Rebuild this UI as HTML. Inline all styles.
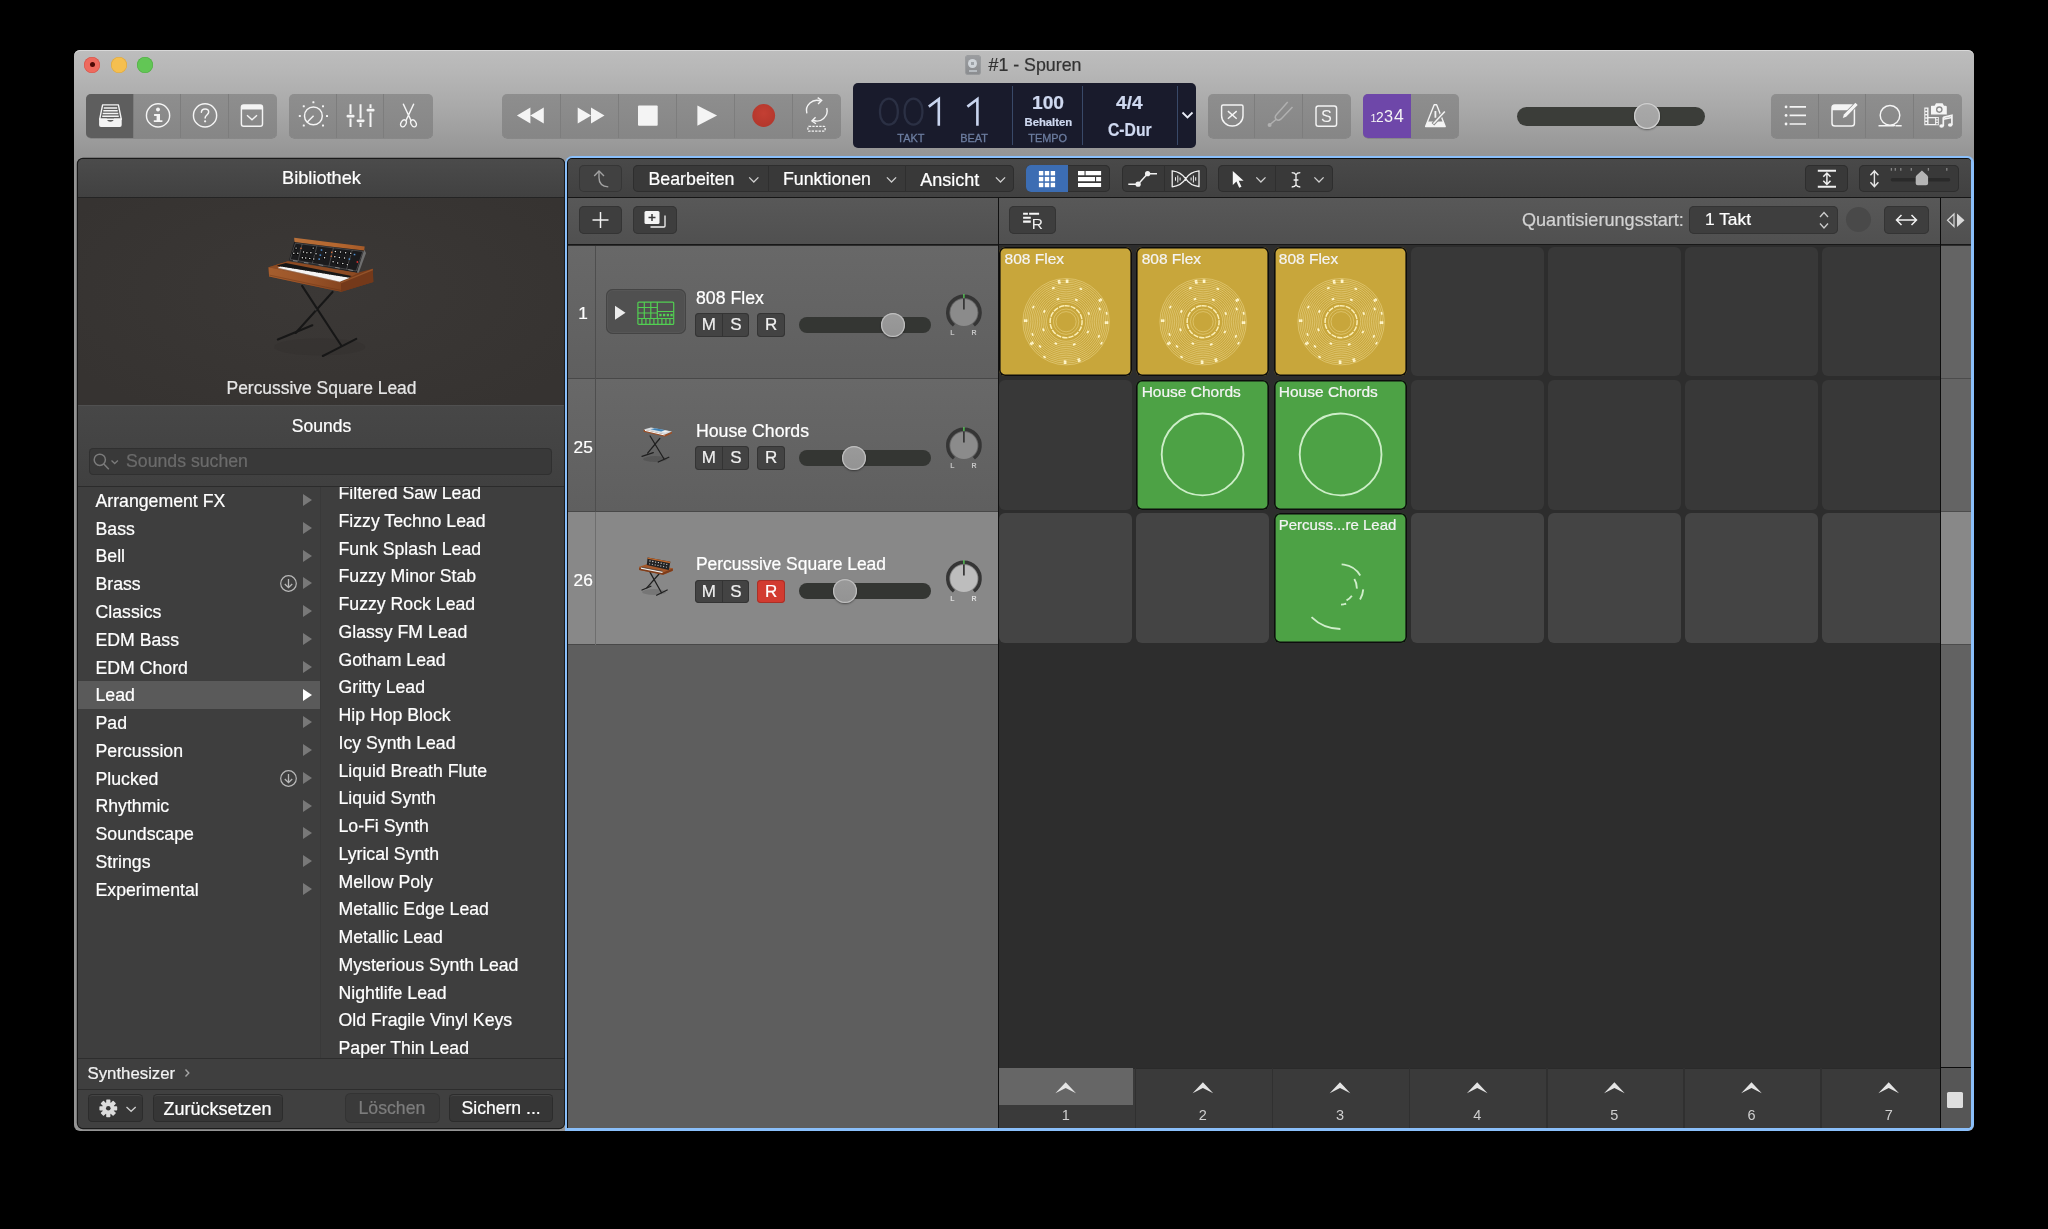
<!DOCTYPE html><html><head><meta charset="utf-8"><title>Logic</title><style>
*{box-sizing:border-box;margin:0;padding:0}
html,body{width:2048px;height:1229px;background:#000;overflow:hidden}
body{position:relative;font-family:"Liberation Sans",sans-serif;color:#fff;font-size:17.7px;-webkit-text-stroke:.22px currentColor}
.a{position:absolute}
.win{will-change:transform;position:absolute;left:74px;top:50px;width:1900px;height:1081px;border-radius:6px;overflow:hidden;
 background:linear-gradient(#bdbdbd 0px,#b7b7b7 20px,#a8a8a8 60px,#979797 100px,#949494 108px,#949494 100%);
 box-shadow:inset 0 1px 0 #d8d8d8}
.tl{position:absolute;width:16px;height:16px;border-radius:50%;top:6.6px;margin-left:-.2px}
.tbg{position:absolute;top:44px;height:44px;border-radius:5px;background:linear-gradient(#8e8e8e,#868686);box-shadow:0 .5px .5px rgba(0,0,0,.25);display:flex;overflow:hidden}
.tbg>div{position:relative;height:44px;border-right:1px solid #7d7d7d;flex:none}
.tbg>div:last-child{border-right:none}
.tbg svg{position:absolute;left:0;top:0;overflow:visible}
.t{position:absolute;white-space:nowrap;line-height:1}
.lcd{position:absolute;left:778.5px;top:33px;width:343px;height:65px;border-radius:5px;background:#191b2c}
.lcd .lab{position:absolute;font-size:10.9px;color:#6c7da0;-webkit-text-stroke:.3px #6c7da0;letter-spacing:0;line-height:1;white-space:nowrap}
.lcd .b{position:absolute;font-weight:bold;color:#cfd9f0;line-height:1;white-space:nowrap}
.lcd .sep{position:absolute;top:3px;height:59px;width:1.3px;background:#394968}
/* library */
.lib{position:absolute;left:3.5px;top:109px;width:486.8px;height:968.8px;border-radius:5px;background:#3e3e3e;overflow:hidden;box-shadow:0 0 0 1.2px #1a1a1a}
.lib .hd{position:absolute;left:0;top:0;width:488px;height:38.8px;background:linear-gradient(#4b4b4b,#414141);border-bottom:1.5px solid #242424}
.cat{position:absolute;left:18px;white-space:nowrap;line-height:1;font-size:17.7px}
.snd{position:absolute;left:261px;white-space:nowrap;line-height:1;font-size:17.7px}
.arr{position:absolute;left:225.2px;width:0;height:0;border-left:9px solid #7a7a7a;border-top:6.5px solid transparent;border-bottom:6.5px solid transparent}
.btn{position:absolute;border-radius:4.5px;background:#363636;box-shadow:0 0 0 1px #2c2c2c inset,inset 0 2px 0 #444}
/* main */
.main{position:absolute;left:491px;top:106px;width:1409px;height:975px;border-radius:7.5px 6.5px 6.5px 0;background:#8abffa;overflow:hidden}
.min{position:absolute;left:2.3px;top:2.3px;right:2.6px;bottom:2.8px;border-radius:5px 4px 4px 0;background:#0e0e0e;overflow:hidden}
.min2{position:absolute;left:.7px;top:.7px;right:.4px;bottom:.2px;border-radius:4px 3.5px 3px 0;background:#2d2d2d;overflow:hidden}
.mb{position:absolute;top:6.2px;height:27.2px;border-radius:5px;background:#393939;box-shadow:0 0 0 1px #2e2e2e inset;overflow:hidden}
.mb svg,.mb2 svg{position:absolute;left:0;top:0;overflow:visible}
.mb2{position:absolute;top:47.5px;height:27.2px;border-radius:5px;background:#3e3e3e;box-shadow:0 0 0 1px #343434 inset;overflow:hidden}
.trk{position:absolute;left:0;width:429px;height:133px}
.trk .num{position:absolute;left:0;width:28px;text-align:center;font-size:17.7px;line-height:1;top:60px}
.ms{position:absolute;height:23.6px;border-radius:4px;background:#434343;box-shadow:0 0 0 1px #343434 inset;font-size:17px;line-height:24.2px;text-align:center;color:#f0f0f0}
.sl{position:absolute;left:231px;width:132px;height:16px;border-radius:8px;background:#343633}
.kn{position:absolute;width:24px;height:24px;border-radius:50%;background:linear-gradient(#9a9a9a,#939393);box-shadow:0 0 0 1.2px #bebebe inset,0 1px 2px rgba(0,0,0,.45)}
.cell{position:absolute;width:133px;height:129.6px;border-radius:6px;background:#383838}
.cell.y{background:#c8a63b;box-shadow:0 0 0 1.6px #0d0d0d inset}
.cell.g{background:#4da245;box-shadow:0 0 0 1.6px #0d0d0d inset}
.cell .nm{position:absolute;left:5.2px;top:3.9px;font-size:15.5px;line-height:1;white-space:nowrap;color:#f4f4f4}
.cell svg{position:absolute;left:0;top:0}
</style></head><body><div class="win"><div class="tl" style="left:10.600px;background:#ee6a5e;box-shadow:0 0 0 .6px #d5544a inset"></div><div class="a" style="left:15.900px;top:12.100px;width:5px;height:5px;border-radius:50%;background:#4d0a05"></div><div class="tl" style="left:36.900px;background:#f5bf4f;box-shadow:0 0 0 .600px #dba741 inset"></div><div class="tl" style="left:63.200px;background:#62c655;box-shadow:0 0 0 .600px #51ae44 inset"></div><div class="a" style="left:891.500px;top:5.500px;width:14.200px;height:18.800px;border-radius:1px;background:linear-gradient(#9a9c9f,#8b8d90);box-shadow:0 0 0 .500px #7d8084"><div class="a" style="left:2.600px;top:3px;width:9px;height:9px;border-radius:50%;background:radial-gradient(#9da2a7 25%,#cfd4d9 30%)"></div><div class="a" style="left:3px;top:14.500px;width:8.200px;height:1.800px;background:#b6bbc0"></div></div><div class="t" style="left:914.500px;top:7px;font-size:17.800px;color:#333">#1 - Spuren</div><div class="tbg" style="left:12px"><div style="width:47.7px;background:#5e5e5e;"><svg width="48" height="44" viewBox="0 0 48 44" ><path d="M16.600 10.900h15.800l2.900 14.300h-21.600z" fill="none" stroke="#f4f4f4" stroke-width="1.400" stroke-linejoin="round"/>
<path d="M17.800 14.100h13.400M17.300 16.800h14.400M16.700 19.500h15.600M16.200 22.200h16.600" stroke="#f4f4f4" stroke-width="1.500" fill="none"/>
<path d="M13.100 24.400h7.600c.3 2.100 1.700 3.300 3.700 3.300s3.400-1.200 3.700-3.300h7.600v6.600a1.900 1.900 0 0 1-1.900 1.900h-18.800a1.900 1.900 0 0 1-1.900-1.900z" fill="#f4f4f4"/></svg></div><div style="width:47.7px;"><svg width="48" height="44" viewBox="0 0 48 44" ><circle cx="24.050" cy="21.400" r="11.600" fill="none" stroke="#f4f4f4" stroke-width="1.450"/>
<circle cx="24" cy="15.500" r="1.950" fill="#f4f4f4"/><path d="M20.100 20.100h5.900v6.100h2.400v1.900h-8.600v-1.900h2.800v-4.300h-2.500z" fill="#f4f4f4"/></svg></div><div style="width:47.7px;"><svg width="48" height="44" viewBox="0 0 48 44" ><circle cx="24.050" cy="21.400" r="11.600" fill="none" stroke="#f4f4f4" stroke-width="1.450"/>
<path d="M20.400 18.300c.1-2.100 1.600-3.300 3.700-3.300s3.600 1.300 3.600 3.100c0 2.900-3.600 2.900-3.600 5.900" fill="none" stroke="#f4f4f4" stroke-width="1.500" stroke-linecap="round"/><circle cx="24.100" cy="27.300" r="1.150" fill="#f4f4f4"/></svg></div><div style="width:47.8px;"><svg width="48" height="44" viewBox="0 0 48 44" ><rect x="12.400" y="10.900" width="21.100" height="21.300" rx="2.300" fill="none" stroke="#f4f4f4" stroke-width="1.450"/>
<path d="M12.400 15.600v-3a1.700 1.700 0 0 1 1.700-1.700h17.700a1.700 1.700 0 0 1 1.700 1.700v3z" fill="#f4f4f4"/><path d="M18 21.300l5 4.400 5-4.400" fill="none" stroke="#f4f4f4" stroke-width="1.450"/></svg></div></div><div class="tbg" style="left:215.1px"><div style="width:48.2px;"><svg width="48" height="44" viewBox="0 0 48 44" ><circle cx="24.400" cy="21.900" r="8.900" fill="none" stroke="#f4f4f4" stroke-width="1.450"/>
<path d="M18.100 28.200l6.500-6.500" stroke="#f4f4f4" stroke-width="1.450"/><rect x="9.80" y="20.90" width="2" height="2" rx=".5" fill="#f4f4f4"/><rect x="13.78" y="11.28" width="2" height="2" rx=".5" fill="#f4f4f4"/><rect x="23.40" y="7.30" width="2" height="2" rx=".5" fill="#f4f4f4"/><rect x="33.02" y="11.28" width="2" height="2" rx=".5" fill="#f4f4f4"/><rect x="37.00" y="20.90" width="2" height="2" rx=".5" fill="#f4f4f4"/><rect x="33.02" y="30.52" width="2" height="2" rx=".5" fill="#f4f4f4"/><rect x="13.78" y="30.52" width="2" height="2" rx=".5" fill="#f4f4f4"/></svg></div><div style="width:47.2px;"><svg width="48" height="44" viewBox="0 0 48 44" ><path d="M13.500 10.200v9.800M13.500 24.400v8.500M23.550 10.200v14.400M23.550 29v3.900M33.500 10.200v3.800M33.500 18.400v14.500" stroke="#f4f4f4" stroke-width="2" fill="none"/>
<path d="M10.900 22.200h5.300M20.950 26.800h5.300M30.900 16.200h5.300" stroke="#f4f4f4" stroke-width="2.800" stroke-linecap="round" fill="none"/></svg></div><div style="width:48.4px;"><svg width="48" height="44" viewBox="0 0 48 44" ><path d="M19.400 10.200l7.600 16.300M29.600 10.200l-7.600 16.300" stroke="#f4f4f4" stroke-width="1.500" fill="none" stroke-linecap="round"/>
<ellipse cx="19.500" cy="29.300" rx="2.500" ry="3.700" transform="rotate(28 19.500 29.300)" fill="none" stroke="#f4f4f4" stroke-width="1.350"/><ellipse cx="29.500" cy="29.300" rx="2.500" ry="3.700" transform="rotate(-28 29.500 29.300)" fill="none" stroke="#f4f4f4" stroke-width="1.350"/></svg></div></div><div class="tbg" style="left:427.8px"><div style="width:59px;"><svg width="59" height="44" viewBox="0 0 59 44" ><path d="M28.400 13.600v15.800l-13.500-7.900zM41.800 13.600v15.800l-13.500-7.900z" fill="#f4f4f4"/></svg></div><div style="width:58.2px;"><svg width="58" height="44" viewBox="0 0 58 44" ><path d="M16.700 13.600v15.800l13.500-7.900zM30 13.600v15.800l13.500-7.900z" fill="#f4f4f4"/></svg></div><div style="width:58px;"><svg width="58" height="44" viewBox="0 0 58 44" ><rect x="19" y="11.500" width="19.700" height="20.200" rx="1" fill="#f4f4f4"/></svg></div><div style="width:58px;"><svg width="58" height="44" viewBox="0 0 58 44" ><path d="M20.400 11.500v20.200l19.700-10.100z" fill="#f4f4f4"/></svg></div><div style="width:58px;"><svg width="58" height="44" viewBox="0 0 58 44" ><defs><radialGradient id="rg" cx="50%" cy="40%" r="60%"><stop offset="0" stop-color="#c43f33"/><stop offset="1" stop-color="#b3372c"/></radialGradient></defs><circle cx="28.700" cy="21.500" r="11.400" fill="url(#rg)"/></svg></div><div style="width:47.7px;"><svg width="48" height="44" viewBox="0 0 48 44" ><path d="M13.85 19.37A10.3 10.3 0 0 1 27.66 7.15" fill="none" stroke="#f4f4f4" stroke-width="1.400"/><path d="M33.75 14.03A10.3 10.3 0 0 1 19.94 26.25" fill="none" stroke="#f4f4f4" stroke-width="1.400"/><path d="M24.66 3.65l4 2.800-3.600 3.600" fill="none" stroke="#f4f4f4" stroke-width="1.400"/><path d="M22.94 29.75l-4-2.800 3.600-3.600" fill="none" stroke="#f4f4f4" stroke-width="1.400"/><rect x="14.900" y="32.300" width="17.200" height="4.900" rx="1" fill="none" stroke="#f4f4f4" stroke-width="1.300" stroke-dasharray="2.300 1.150"/></svg></div></div><div class="tbg" style="left:1133.5px"><div style="width:47.9px;"><svg width="48" height="44" viewBox="0 0 48 44" ><path d="M13.600 12.400a1.500 1.500 0 0 1 1.500-1.500h18.400a1.500 1.500 0 0 1 1.500 1.500v9.300c0 5.800-4.800 10.300-10.700 10.300s-10.700-4.500-10.700-10.300z" fill="none" stroke="#f4f4f4" stroke-width="1.450"/>
<path d="M19.900 17.100l8.800 7.600M28.700 17.100l-8.800 7.600" stroke="#f4f4f4" stroke-width="1.450"/></svg></div><div style="width:48.1px;"><svg width="48" height="44" viewBox="0 0 48 44" ><path d="M32.700 8.100l-11.100 12.300c-1.700 1.900-1.500 3.800-.4 4.900s3 1.300 4.900-.4l11.400-12" fill="none" stroke="#b0b0b0" stroke-width="1.500"/>
<path d="M21.300 25.200l-6 5" stroke="#b0b0b0" stroke-width="1.400"/><circle cx="14.600" cy="30.900" r="2" fill="#b0b0b0"/></svg></div><div style="width:47.5px;"><svg width="48" height="44" viewBox="0 0 48 44" ><rect x="13" y="11.900" width="20.600" height="20.300" rx="2.300" fill="none" stroke="#f4f4f4" stroke-width="1.450"/>
<text x="23.400" y="28" font-size="16.200" text-anchor="middle" fill="#f4f4f4" font-family="Liberation Sans">S</text></svg></div></div><div class="tbg" style="left:1289.1px"><div style="width:47.6px;background:#6e47a9;border-right-color:#6e47a9;"><svg width="48" height="44" viewBox="0 0 48 44" ><text x="7.600" y="27.600" font-size="10.800" font-family="Liberation Sans" fill="#f4f4f4">1</text><text x="13.100" y="27.600" font-size="13.800" font-family="Liberation Sans" fill="#f4f4f4">2</text><text x="21" y="27.600" font-size="16.300" font-family="Liberation Sans" fill="#f4f4f4">3</text><text x="30.900" y="27.600" font-size="17.600" font-family="Liberation Sans" fill="#f4f4f4">4</text></svg></div><div style="width:48.4px;"><svg width="48" height="44" viewBox="0 0 48 44" ><path d="M23.200 10.800h2.400l8.600 21.700h-19.600z" fill="none" stroke="#f4f4f4" stroke-width="1.400" stroke-linejoin="round"/>
<path d="M16.800 27.600h15.200l2.200 4.900h-19.600z" fill="#f4f4f4"/><path d="M24.400 17v6.800" stroke="#f4f4f4" stroke-width="1.800"/>
<path d="M33.600 17.800l-11.700 12.400" stroke="#8c8c8c" stroke-width="3.600"/><path d="M33.800 17.600l-11.400 12.100" stroke="#f4f4f4" stroke-width="1.500"/></svg></div></div><div class="tbg" style="left:1697px"><div style="width:47.9px;"><svg width="48" height="44" viewBox="0 0 48 44" ><path d="M18.600 12.900h16.400M18.600 21.400h16.400M18.600 30h16.400" stroke="#f4f4f4" stroke-width="1.700"/><circle cx="15.050" cy="12.900" r="1.400" fill="#f4f4f4"/><circle cx="15.050" cy="21.400" r="1.400" fill="#f4f4f4"/><circle cx="15.050" cy="30" r="1.400" fill="#f4f4f4"/></svg></div><div style="width:47.4px;"><svg width="48" height="44" viewBox="0 0 48 44" ><rect x="13" y="11.100" width="22.400" height="20.900" rx="2.800" fill="none" stroke="#f4f4f4" stroke-width="1.500"/><path d="M13 16.200v-2.300a2.800 2.800 0 0 1 2.800-2.800h16.800a2.800 2.800 0 0 1 2.800 2.800v2.300z" fill="#f4f4f4"/>
<path d="M24.900 20.600l11.500-11.800 2.300 2.200-11.500 11.800-3.400 1.100z" fill="#f4f4f4" stroke="#8a8a8a" stroke-width="1.500" stroke-linejoin="round" paint-order="stroke"/></svg></div><div style="width:47.4px;"><svg width="48" height="44" viewBox="0 0 48 44" ><circle cx="24" cy="21.300" r="9.800" fill="none" stroke="#f4f4f4" stroke-width="1.450"/><path d="M12.500 31.800h13c1.500 0 2.500-.2 3.500-.6M29.500 31.800h6.200" fill="none" stroke="#f4f4f4" stroke-width="1.500"/></svg></div><div style="width:48.2px;"><svg width="48" height="44" viewBox="0 0 48 44" ><path d="M10.300 13.500h4.200v9.500h10.300v8.300h-14.500z" fill="#f4f4f4"/><rect x="11.300" y="14.8" width="1.800" height="1.900" fill="#8a8a8a"/><rect x="11.300" y="18.1" width="1.800" height="1.900" fill="#8a8a8a"/><rect x="11.300" y="21.4" width="1.800" height="1.900" fill="#8a8a8a"/><rect x="11.300" y="24.7" width="1.800" height="1.900" fill="#8a8a8a"/><rect x="11.300" y="28.0" width="1.800" height="1.900" fill="#8a8a8a"/><rect x="22.200" y="23.9" width="1.700" height="1.500" fill="#8a8a8a"/><rect x="22.200" y="26.4" width="1.700" height="1.500" fill="#8a8a8a"/><rect x="22.200" y="28.9" width="1.700" height="1.500" fill="#8a8a8a"/><rect x="14.500" y="24.300" width="6.600" height="5.700" fill="#8a8a8a"/><path d="M17.600 11.800h3l1.400-2.500h6.600l1.400 2.500h1.500a1.300 1.300 0 0 1 1.300 1.300v7.400h-15.800v-7.900a.8.800 0 0 1 .6-.8z" fill="#f4f4f4" stroke="#8a8a8a" stroke-width="1" paint-order="stroke"/><circle cx="25.300" cy="15.600" r="3.300" fill="#8a8a8a"/><circle cx="25.300" cy="15.600" r="1.900" fill="#f4f4f4"/><path d="M29.300 23.300l8.600-1.900v9.700M29.300 23.300v8.800" fill="none" stroke="#f4f4f4" stroke-width="1.700"/><path d="M29.300 25.300l8.600-1.900" stroke="#f4f4f4" stroke-width="1.500"/><ellipse cx="27.600" cy="32" rx="2.300" ry="1.750" fill="#f4f4f4"/><ellipse cx="36.200" cy="31" rx="2.300" ry="1.750" fill="#f4f4f4"/></svg></div></div><div class="a" style="left:1443px;top:56.500px;width:188px;height:19px;border-radius:9.500px;background:#3b3d39"></div><div class="a" style="left:1560px;top:53px;width:26px;height:26px;border-radius:50%;background:linear-gradient(#a9a9a9,#a2a2a2);box-shadow:0 0 0 1.2px #cfcfcf inset,0 1px 2px rgba(0,0,0,.4)"></div><div class="lcd"><svg width="343" height="65" viewBox="0 0 343 65" style="position:absolute;left:0;top:0"><g fill="none">
<rect x="27" y="15.600" width="17.800" height="26" rx="8.900" ry="11.500" stroke="#2b3044" stroke-width="2.300"/><rect x="51.600" y="15.600" width="17.800" height="26" rx="8.900" ry="11.500" stroke="#2b3044" stroke-width="2.300"/>
<path d="M75.800 23.600l10-7.600v26.700" stroke="#c9d5ef" stroke-width="2.600"/><path d="M114.400 23.600l10-7.600v26.700" stroke="#c9d5ef" stroke-width="2.600"/></g></svg><div class="lab" style="left:44.800px;top:50.300px">TAKT</div><div class="lab" style="left:107.800px;top:50.300px">BEAT</div><div class="lab" style="left:175.800px;top:50.300px">TEMPO</div><div class="sep" style="left:159.300px"></div><div class="sep" style="left:229.300px"></div><div class="sep" style="left:324.200px"></div><div class="b" style="left:179.500px;top:10px;font-size:19.200px">100</div><div class="b" style="left:172px;top:33.500px;font-size:11.300px">Behalten</div><div class="b" style="left:263.500px;top:10px;font-size:19.200px">4/4</div><div class="b" style="left:255.800px;top:37.500px;font-size:18.600px;transform:scaleX(.845);transform-origin:0 0">C-Dur</div><svg width="343" height="65" viewBox="0 0 343 65" style="position:absolute;left:0;top:0"><path d="M329.500 29.500l5 5 5-5" fill="none" stroke="#e8ecf6" stroke-width="1.800"/></svg></div><div class="lib"><div class="hd"></div><div class="t" style="left:0;width:488px;text-align:center;top:10.200px;font-size:18.200px">Bibliothek</div><div class="a" style="left:0;top:39px;width:488px;height:207px;background:radial-gradient(ellipse 60% 70% at 50% 45%,#3b3836,#363331)"></div><svg width="488" height="969" viewBox="0 0 488 969" style="position:absolute;left:0;top:0"><defs><linearGradient id="wf" x1="0" y1="0" x2="1" y2="0"><stop offset="0" stop-color="#a55e2e"/><stop offset=".5" stop-color="#9a5429"/><stop offset="1" stop-color="#86451f"/></linearGradient><linearGradient id="wt" x1="0" y1="0" x2="1" y2="0"><stop offset="0" stop-color="#b8703a"/><stop offset=".6" stop-color="#b5672f"/><stop offset="1" stop-color="#a55a28"/></linearGradient></defs><g transform="translate(172.300 66) scale(.11391)"><ellipse cx="610" cy="1070" rx="400" ry="75" fill="#2c2927" opacity=".22"/><g stroke="#171717" stroke-width="18.500" stroke-linecap="round" fill="none"><path d="M455 535L800 1060"/><path d="M722 588L398 948"/><path d="M242 1005L545 880"/><path d="M637 1150L930 1000"/></g><circle cx="575" cy="745" r="6" fill="#555"/><path d="M160 372L330 318L940 420L1075 385L1080 500L800 587L165 452Z" fill="#7a3c1a"/><path d="M160 372L330 318L945 422L795 500Z" fill="#8d4b23"/><path d="M160 372L795 500L800 587L165 452Z" fill="url(#wf)"/><path d="M795 500L1075 385L1080 500L800 587Z" fill="#74391a"/><path d="M795 500L1075 385L1076 398L797 512Z" fill="#94532a"/><path d="M168 440L800 575" stroke="#5a2a10" stroke-width="6" opacity=".5"/><path d="M232 356L312 334L890 448L800 494Z" fill="#161616"/><path d="M240 376L270 364L874 463L786 498Z" fill="#f4f4f4"/><path d="M272 358L872 456" stroke="#1a1a1a" stroke-width="13" stroke-dasharray="9 7 9 7 9 16 9 7 9 16"/><path d="M243 380L787 500" stroke="#bdbdbd" stroke-width="3"/><path d="M388 140L1000 215L936 416L340 310Z" fill="#1b1b1d"/><path d="M1000 215L1016 245L952 420L936 416Z" fill="#6f6f6f"/><path d="M385 113L1004 188L1000 224L388 150Z" fill="url(#wt)"/><g fill="none" stroke="#cfcfcf" stroke-width="2.500" opacity=".85"><path d="M396 160L988 232L930 404L350 302Z"/><path d="M455 167L420 314M585 183L545 336M730 200L690 362M895 221L845 389"/></g><circle cx="400" cy="205" r="13" fill="#070707"/><circle cx="402" cy="203" r="6.500" fill="#ededed"/><circle cx="380" cy="250" r="13" fill="#070707"/><circle cx="382" cy="248" r="6.500" fill="#ededed"/><circle cx="415" cy="250" r="13" fill="#070707"/><circle cx="417" cy="248" r="6.500" fill="#ededed"/><circle cx="465" cy="240" r="13" fill="#070707"/><circle cx="467" cy="238" r="6.500" fill="#ededed"/><circle cx="495" cy="245" r="13" fill="#070707"/><circle cx="497" cy="243" r="6.500" fill="#ededed"/><circle cx="530" cy="245" r="13" fill="#070707"/><circle cx="532" cy="243" r="6.500" fill="#ededed"/><circle cx="455" cy="290" r="13" fill="#070707"/><circle cx="457" cy="288" r="6.500" fill="#ededed"/><circle cx="485" cy="292" r="13" fill="#070707"/><circle cx="487" cy="290" r="6.500" fill="#ededed"/><circle cx="520" cy="295" r="13" fill="#070707"/><circle cx="522" cy="293" r="6.500" fill="#ededed"/><circle cx="550" cy="205" r="13" fill="#070707"/><circle cx="552" cy="203" r="6.500" fill="#ededed"/><circle cx="575" cy="255" r="13" fill="#070707"/><circle cx="577" cy="253" r="6.500" fill="#ededed"/><circle cx="555" cy="300" r="13" fill="#070707"/><circle cx="557" cy="298" r="6.500" fill="#ededed"/><circle cx="660" cy="245" r="13" fill="#070707"/><circle cx="662" cy="243" r="6.500" fill="#ededed"/><circle cx="650" cy="290" r="13" fill="#070707"/><circle cx="652" cy="288" r="6.500" fill="#ededed"/><circle cx="745" cy="235" r="13" fill="#070707"/><circle cx="747" cy="233" r="6.500" fill="#ededed"/><circle cx="790" cy="240" r="13" fill="#070707"/><circle cx="792" cy="238" r="6.500" fill="#ededed"/><circle cx="835" cy="245" r="13" fill="#070707"/><circle cx="837" cy="243" r="6.500" fill="#ededed"/><circle cx="880" cy="250" r="13" fill="#070707"/><circle cx="882" cy="248" r="6.500" fill="#ededed"/><circle cx="740" cy="280" r="13" fill="#070707"/><circle cx="742" cy="278" r="6.500" fill="#ededed"/><circle cx="780" cy="287" r="13" fill="#070707"/><circle cx="782" cy="285" r="6.500" fill="#ededed"/><circle cx="825" cy="292" r="13" fill="#070707"/><circle cx="827" cy="290" r="6.500" fill="#ededed"/><circle cx="725" cy="325" r="13" fill="#070707"/><circle cx="727" cy="323" r="6.500" fill="#ededed"/><circle cx="765" cy="335" r="13" fill="#070707"/><circle cx="767" cy="333" r="6.500" fill="#ededed"/><circle cx="810" cy="340" r="13" fill="#070707"/><circle cx="812" cy="338" r="6.500" fill="#ededed"/><circle cx="850" cy="350" r="13" fill="#070707"/><circle cx="852" cy="348" r="6.500" fill="#ededed"/><rect x="618" y="213" width="14" height="13" fill="#4a90d6"/><rect x="608" y="258" width="14" height="13" fill="#4a90d6"/><rect x="598" y="293" width="14" height="13" fill="#4a90d6"/><rect x="908" y="253" width="14" height="13" fill="#4a90d6"/><rect x="863" y="293" width="14" height="13" fill="#4a90d6"/><circle cx="445" cy="205" r="7" fill="#e0703a"/><circle cx="715" cy="240" r="7" fill="#e0703a"/><circle cx="710" cy="275" r="7" fill="#e0703a"/><circle cx="940" cy="325" r="8" fill="#d83030"/><path d="M375 312l40 7" stroke="#ddd" stroke-width="4"/><path d="M470 328l40 7" stroke="#ddd" stroke-width="4"/><path d="M600 348l40 7" stroke="#ddd" stroke-width="4"/><path d="M745 372l40 7" stroke="#ddd" stroke-width="4"/><path d="M860 392l40 7" stroke="#ddd" stroke-width="4"/></g></svg><div class="t" style="left:0;width:488px;text-align:center;top:220.500px;font-size:17.450px;color:#e6e6e6">Percussive Square Lead</div><div class="a" style="left:0;top:246px;width:488px;height:81.500px;background:linear-gradient(#474747,#404040);border-top:1px solid #505050;border-bottom:1.500px solid #2b2b2b"></div><div class="t" style="left:0;width:488px;text-align:center;top:259.200px;font-size:17.500px">Sounds</div><div class="a" style="left:11.500px;top:288.500px;width:463px;height:27.500px;border-radius:4.500px;background:#393939;box-shadow:0 0 0 1px #303030 inset"></div><svg width="488" height="969" viewBox="0 0 488 969" style="position:absolute;left:0;top:0"><g transform="translate(-77 -159)" fill="none" stroke="#7b7b7b" stroke-width="1.500"><circle cx="98.800" cy="459.800" r="5.600"/><path d="M102.800 464l5 5.300"/><path d="M110.500 460.500l3.200 3 3.200-3" stroke-width="1.300"/></g></svg><div class="t" style="left:48.500px;top:294.200px;font-size:17.700px;color:#6b6b6b">Sounds suchen</div><div class="a" style="left:0;top:327.500px;width:488px;height:571.500px;background:#3e3e3e;overflow:hidden"><div class="a" style="left:242px;top:0;width:1.500px;height:572px;background:#393939"></div><div class="cat" style="top:6.4px">Arrangement FX</div><div class="arr" style="top:7.6px;border-left-color:#787878"></div><div class="cat" style="top:34.1px">Bass</div><div class="arr" style="top:35.4px;border-left-color:#787878"></div><div class="cat" style="top:61.9px">Bell</div><div class="arr" style="top:63.1px;border-left-color:#787878"></div><div class="cat" style="top:89.7px">Brass</div><div class="arr" style="top:90.9px;border-left-color:#787878"></div><svg class="a" style="left:201.4px;top:87.8px" width="19" height="19" viewBox="0 0 19 19"><circle cx="9.500" cy="9.500" r="7.800" fill="none" stroke="#b9b9b9" stroke-width="1.200"/><path d="M9.500 5v8.300M5.800 10l3.700 3.600 3.700-3.600" fill="none" stroke="#b9b9b9" stroke-width="1.300"/></svg><div class="cat" style="top:117.4px">Classics</div><div class="arr" style="top:118.7px;border-left-color:#787878"></div><div class="cat" style="top:145.2px">EDM Bass</div><div class="arr" style="top:146.4px;border-left-color:#787878"></div><div class="cat" style="top:173.0px">EDM Chord</div><div class="arr" style="top:174.2px;border-left-color:#787878"></div><div class="a" style="left:0;top:194.8px;width:242px;height:27.500px;background:#5a5a5a"></div><div class="cat" style="top:200.7px">Lead</div><div class="arr" style="top:202.0px;border-left-color:#ffffff"></div><div class="cat" style="top:228.5px">Pad</div><div class="arr" style="top:229.8px;border-left-color:#787878"></div><div class="cat" style="top:256.3px">Percussion</div><div class="arr" style="top:257.5px;border-left-color:#787878"></div><div class="cat" style="top:284.1px">Plucked</div><div class="arr" style="top:285.3px;border-left-color:#787878"></div><svg class="a" style="left:201.4px;top:282.2px" width="19" height="19" viewBox="0 0 19 19"><circle cx="9.500" cy="9.500" r="7.800" fill="none" stroke="#b9b9b9" stroke-width="1.200"/><path d="M9.500 5v8.300M5.800 10l3.700 3.600 3.700-3.600" fill="none" stroke="#b9b9b9" stroke-width="1.300"/></svg><div class="cat" style="top:311.8px">Rhythmic</div><div class="arr" style="top:313.1px;border-left-color:#787878"></div><div class="cat" style="top:339.6px">Soundscape</div><div class="arr" style="top:340.8px;border-left-color:#787878"></div><div class="cat" style="top:367.4px">Strings</div><div class="arr" style="top:368.6px;border-left-color:#787878"></div><div class="cat" style="top:395.1px">Experimental</div><div class="arr" style="top:396.4px;border-left-color:#787878"></div><div class="snd" style="top:-1.4px">Filtered Saw Lead</div><div class="snd" style="top:26.4px">Fizzy Techno Lead</div><div class="snd" style="top:54.1px">Funk Splash Lead</div><div class="snd" style="top:81.9px">Fuzzy Minor Stab</div><div class="snd" style="top:109.6px">Fuzzy Rock Lead</div><div class="snd" style="top:137.4px">Glassy FM Lead</div><div class="snd" style="top:165.1px">Gotham Lead</div><div class="snd" style="top:192.9px">Gritty Lead</div><div class="snd" style="top:220.6px">Hip Hop Block</div><div class="snd" style="top:248.4px">Icy Synth Lead</div><div class="snd" style="top:276.1px">Liquid Breath Flute</div><div class="snd" style="top:303.9px">Liquid Synth</div><div class="snd" style="top:331.6px">Lo-Fi Synth</div><div class="snd" style="top:359.4px">Lyrical Synth</div><div class="snd" style="top:387.1px">Mellow Poly</div><div class="snd" style="top:414.9px">Metallic Edge Lead</div><div class="snd" style="top:442.6px">Metallic Lead</div><div class="snd" style="top:470.4px">Mysterious Synth Lead</div><div class="snd" style="top:498.1px">Nightlife Lead</div><div class="snd" style="top:525.9px">Old Fragile Vinyl Keys</div><div class="snd" style="top:553.6px">Paper Thin Lead</div></div><div class="a" style="left:0;top:899px;width:488px;height:32px;background:#3f3f3f;border-top:1.500px solid #2d2d2d;border-bottom:1.500px solid #2d2d2d"></div><div class="t" style="left:10px;top:907.300px;font-size:16.800px;color:#f2f2f2">Synthesizer</div><svg width="488" height="969" viewBox="0 0 488 969" style="position:absolute;left:0;top:0"><path d="M107.500 910.500l3.300 3.500-3.300 3.500" fill="none" stroke="#a5a5a5" stroke-width="1.400"/></svg><div class="a" style="left:0;top:931px;width:488px;height:38px;background:#404040"></div><div class="btn" style="left:10.800px;top:935.200px;width:54.500px;height:27.800px"></div><div class="btn" style="left:75.800px;top:935.200px;width:129.500px;height:27.800px"></div><div class="btn" style="left:268.500px;top:935.200px;width:92.500px;height:27.800px;background:#3a3a3a;box-shadow:0 0 0 1px #333"></div><div class="btn" style="left:371.500px;top:935.200px;width:104.300px;height:27.800px"></div><div class="t" style="left:86px;top:940.500px;font-size:18px">Zurücksetzen</div><div class="t" style="left:281px;top:941px;font-size:17.700px;color:#7d7d7d">Löschen</div><div class="t" style="left:384px;top:941px;font-size:17.600px">Sichern ...</div><svg width="488" height="969" viewBox="0 0 488 969" style="position:absolute;left:0;top:0"><g transform="translate(30.300 949.300)"><rect x="-2.100" y="-8.900" width="4.200" height="4.500" rx=".7" transform="rotate(0)" fill="#dcdcdc"/><rect x="-2.100" y="-8.900" width="4.200" height="4.500" rx=".7" transform="rotate(45)" fill="#dcdcdc"/><rect x="-2.100" y="-8.900" width="4.200" height="4.500" rx=".7" transform="rotate(90)" fill="#dcdcdc"/><rect x="-2.100" y="-8.900" width="4.200" height="4.500" rx=".7" transform="rotate(135)" fill="#dcdcdc"/><rect x="-2.100" y="-8.900" width="4.200" height="4.500" rx=".7" transform="rotate(180)" fill="#dcdcdc"/><rect x="-2.100" y="-8.900" width="4.200" height="4.500" rx=".7" transform="rotate(225)" fill="#dcdcdc"/><rect x="-2.100" y="-8.900" width="4.200" height="4.500" rx=".7" transform="rotate(270)" fill="#dcdcdc"/><rect x="-2.100" y="-8.900" width="4.200" height="4.500" rx=".7" transform="rotate(315)" fill="#dcdcdc"/><circle r="6" fill="#dcdcdc"/><circle r="2.300" fill="#353535"/></g><path d="M48.500 948l4.600 4.300 4.600-4.300" fill="none" stroke="#cfcfcf" stroke-width="1.300"/></svg></div><div class="main"><div class="min"><div class="min2"><div class="a" style="left:0;top:0;width:1403px;height:38.600px;background:linear-gradient(#494949,#414141);border-bottom:1.300px solid #161616"></div><div class="mb" style="left:11.300px;width:43px;background:#414141;box-shadow:0 0 0 1px #363636 inset"></div><div class="mb" style="left:65.500px;width:380.700px"></div><div class="a" style="left:200px;top:6.500px;width:1px;height:27px;background:#2f2f2f"></div><div class="a" style="left:337px;top:6.500px;width:1px;height:27px;background:#2f2f2f"></div><div class="mb" style="left:457.800px;width:84.700px"><div class="a" style="left:0;top:0;width:42px;height:27px;background:#3c6db3"></div></div><div class="mb" style="left:554.200px;width:84.800px"></div><div class="a" style="left:596.200px;top:6.500px;width:1px;height:27px;background:#2f2f2f"></div><div class="mb" style="left:650.200px;width:114.400px"></div><div class="a" style="left:707.200px;top:6.500px;width:1px;height:27px;background:#2f2f2f"></div><div class="mb" style="left:1237.500px;width:43px"></div><div class="mb" style="left:1291.500px;width:99.800px"></div><div class="t" style="left:80.5px;top:12px;font-size:17.8px">Bearbeiten</div><div class="t" style="left:215px;top:12px;font-size:17.8px">Funktionen</div><div class="t" style="left:352.2px;top:12px;font-size:18px">Ansicht</div><svg width="1403" height="969" viewBox="0 0 1403 969" style="position:absolute;left:0;top:0;overflow:visible"><path d="M31 12.300v6.500c0 5.500 3.500 8.700 9.300 9.100" fill="none" stroke="#a2a2a2" stroke-width="1.400"/><path d="M26.200 16.900l4.800-5 5 5" fill="none" stroke="#a2a2a2" stroke-width="1.400"/><path d="M181.20000000000002 18.4l4.600 4.600 4.600-4.600" fill="none" stroke="#cfcfcf" stroke-width="1.300"/><path d="M318.9 18.4l4.600 4.600 4.600-4.600" fill="none" stroke="#cfcfcf" stroke-width="1.300"/><path d="M427.9 18.4l4.600 4.600 4.600-4.600" fill="none" stroke="#cfcfcf" stroke-width="1.300"/><rect x="470.9" y="12.0" width="4.400" height="4.400" fill="#fff"/><rect x="470.9" y="17.9" width="4.400" height="4.400" fill="#fff"/><rect x="470.9" y="23.8" width="4.400" height="4.400" fill="#fff"/><rect x="476.8" y="12.0" width="4.400" height="4.400" fill="#fff"/><rect x="476.8" y="17.9" width="4.400" height="4.400" fill="#fff"/><rect x="476.8" y="23.8" width="4.400" height="4.400" fill="#fff"/><rect x="482.7" y="12.0" width="4.400" height="4.400" fill="#fff"/><rect x="482.7" y="17.9" width="4.400" height="4.400" fill="#fff"/><rect x="482.7" y="23.8" width="4.400" height="4.400" fill="#fff"/><path d="M510 14.100h6.500M517.600 14.100h15.500M510 20.100h17M528.100 20.100h5M510 26h23.100" stroke="#fff" stroke-width="4.100"/><path d="M560.300 25.200h9.800l9.500-10.500h9.400" fill="none" stroke="#f0f0f0" stroke-width="1.400"/><circle cx="570.100" cy="25.200" r="2.600" fill="#f0f0f0"/><circle cx="579.600" cy="14.700" r="2.600" fill="#f0f0f0"/><path d="M604.200 11.300v17M631 11.300v17M604.200 11.800c6 .7 10.500 3.500 13.400 7.900s7.400 7.300 13.400 8M604.200 27.800c6-.7 10.500-3.500 13.400-8s7.400-7.200 13.400-7.900" fill="none" stroke="#f0f0f0" stroke-width="1.300"/><path d="M607.500 18.200v3.500M609.800 16.500v7M612.100 18.500v3M623.100 18.500v3M625.400 16.500v7M627.700 18.200v3.500M617.600 18v4" stroke="#f0f0f0" stroke-width="1"/><path d="M664.800 12v14l3.600-3.400 2.800 6.100 2.300-1-2.800-6h4.900z" fill="#f6f6f6"/><path d="M688.3 18.4l4.600 4.600 4.600-4.600" fill="none" stroke="#cfcfcf" stroke-width="1.300"/><path d="M723.700 13.600c2.200 0 3.600.7 4.300 2.100.700-1.400 2.100-2.100 4.300-2.100M723.700 28c2.200 0 3.600-.7 4.300-2.100.700 1.400 2.100 2.100 4.300 2.100M728 15.500v10.600M725.600 21h4.800" fill="none" stroke="#f0f0f0" stroke-width="1.350"/><path d="M746.4 18.4l4.600 4.600 4.600-4.600" fill="none" stroke="#cfcfcf" stroke-width="1.300"/><path d="M1249.800 11.800h18.200M1249.800 27.700h18.200" stroke="#f0f0f0" stroke-width="1.900" fill="none"/><path d="M1258.900 14v11.500M1255.300 17.800l3.600-3.800 3.600 3.800M1255.300 21.700l3.600 3.800 3.600-3.800" fill="none" stroke="#f0f0f0" stroke-width="1.500"/><path d="M1306.400 12v15.500M1302.400 16.200l4-4.300 4 4.300M1302.400 23.300l4 4.300 4-4.300" fill="none" stroke="#e4e4e4" stroke-width="1.400"/><path d="M1324.500 20.700h56" stroke="#2a2a2a" stroke-width="3.600" stroke-linecap="round"/><path d="M1323.400 9v2.800M1327.300 9v2.800M1332.800 9v2.800M1343.300 9v2.800M1360.400 9v2.800M1378.800 9v2.800" stroke="#858585" stroke-width="1.300"/><path d="M1347.700 18.500c0-1 .4-1.700 1-2.300l5.200-4.700 5.200 4.700c.6.600 1 1.300 1 2.300v5.700a2 2 0 0 1-2 2h-8.400a2 2 0 0 1-2-2z" fill="#b4b4b4"/></svg><div class="a" style="left:0;top:38.600px;width:1403px;height:47.900px;background:linear-gradient(#585858,#505050);border-bottom:1.800px solid #181818"></div><div class="a" style="left:429.700px;top:38.600px;width:1.300px;height:931px;background:#111"></div><div class="mb2" style="left:11.300px;width:43px"></div><div class="mb2" style="left:65.500px;width:43.200px"></div><div class="mb2" style="left:441.500px;width:46.500px"></div><div class="mb2" style="left:1121.200px;width:148.600px"></div><div class="mb2" style="left:1316.200px;width:44.800px"></div><div class="a" style="left:1278px;top:48.200px;width:25px;height:25px;border-radius:50%;background:#494949"></div><div class="t" style="left:954px;top:52.300px;font-size:18.100px;color:#d2d2d2">Quantisierungsstart:</div><div class="t" style="left:1137px;top:52.500px;font-size:17.400px">1 Takt</div><svg width="1403" height="969" viewBox="0 0 1403 969" style="position:absolute;left:0;top:0;overflow:visible"><path d="M24.500 61h16M32.500 53v16" stroke="#f2f2f2" stroke-width="1.500"/><rect x="76.500" y="52" width="15" height="13" rx="1.500" fill="#f4f4f4"/><path d="M80.500 58.500h7M84 55v7" stroke="#3a3a3a" stroke-width="1.500"/><path d="M82.500 68h13.500a1 1 0 0 0 1-1v-10.500" fill="none" stroke="#f4f4f4" stroke-width="1.300"/><path d="M455.100 54.750h4.800M461.100 54.750h10M455.100 58.750h7.700M455.100 62.700h7.700" stroke="#f6f6f6" stroke-width="2.200"/><text x="463.700" y="69.500" font-size="15.500" fill="#f2f2f2" font-family="Liberation Sans">R</text><path d="M1252 58l4-4.500 4 4.500M1252 64.500l4 4.500 4-4.500" fill="none" stroke="#cdcdcd" stroke-width="1.300"/><path d="M1328.500 61h20M1333.500 56l-5 5 5 5M1343.500 56l5 5-5 5" fill="none" stroke="#f2f2f2" stroke-width="1.500"/><path d="M1386 55v12.500l-6.500-6.250z" fill="none" stroke="#d9d9d9" stroke-width="1.200"/><path d="M1389 54.500v13.500l7.500-6.750z" fill="#d9d9d9"/></svg><div class="a" style="left:1372.200px;top:38.600px;width:1.100px;height:931px;background:#0c0c0c"></div><div class="a" style="left:0;top:86.800px;width:429.700px;height:882.500px;background:#5e5e5e"></div><div class="trk" style="top:86.8px;background:linear-gradient(#686868,#5f5f5f);border-bottom:1.500px solid #484848;width:429.700px;height:133.200px"><div class="a" style="left:27px;top:0;width:1px;height:133px;background:#4e4e4e"></div><div class="num" style="top:59.7px;font-size:17.300px;left:1.200px">1</div><div class="t" style="left:128px;top:44.2px;font-size:17.7px">808 Flex</div><div class="ms" style="left:127px;top:67.400px;width:54.500px"></div><div class="a" style="left:154.300px;top:67.400px;width:1px;height:23.600px;background:#333"></div><div class="ms" style="left:127px;top:67.400px;width:27.500px;background:none;box-shadow:none">M</div><div class="ms" style="left:154.500px;top:67.400px;width:27px;background:none;box-shadow:none">S</div><div class="ms" style="left:189.300px;top:67.400px;width:27.700px;">R</div><div class="sl" style="top:71.300px"></div><div class="kn" style="left:313.1px;top:66.800px"></div><div class="a" style="left:38px;top:43px;width:80px;height:45.500px;border-radius:7px;background:#505050;box-shadow:0 0 0 1px #444 inset,inset 0 0 0 2px #565656"></div><svg width="429.5" height="133" viewBox="0 0 429.5 133" style="position:absolute;left:0;top:0;overflow:visible"><path d="M385.93 79.27A16.2 16.2 0 1 1 405.87 79.27" fill="none" stroke="#353535" stroke-width="3.400"/><circle cx="395.9" cy="66.5" r="13.600" fill="#8b8b8b"/><path d="M395.9 63.5V52.5" stroke="#343434" stroke-width="1.700"/><path d="M395.9 52.0V47.9" stroke="#58d058" stroke-width="1.300"/><text x="382.29999999999995" y="88.7" font-size="7" font-weight="bold" fill="#c4c4c4" font-family="Liberation Sans">L</text><text x="403.5" y="88.7" font-size="7" font-weight="bold" fill="#c4c4c4" font-family="Liberation Sans">R</text><path d="M47 59.800v14l10.500-7z" fill="#ececec"/><g transform="translate(69.3 55.5)" fill="none" stroke="#52cf52" stroke-width="1.200"><rect x=".6" y=".6" width="35.800" height="22.300" rx="1"/><path d="M.6 6h19.400M.6 11.500h19.400M.6 17h35.800M7 .6v16.400M13.500 .6v16.400M20 .6v16.400M20 10h16.400"/><path d="M4.600 17v5.900M8.600 17v5.900M12.600 17v5.900M16.600 17v5.900M20.600 17v5.900M24.600 17v5.900M28.600 17v5.900M32.600 17v5.900"/><g fill="#52cf52" stroke="none"><rect x="22" y="12.300" width="2.300" height="2.500"/><rect x="25.700" y="12.300" width="2.300" height="2.500"/><rect x="29.400" y="12.300" width="2.300" height="2.500"/><rect x="33.100" y="12.300" width="2.300" height="2.500"/></g></g></svg></div><div class="trk" style="top:220.0px;background:linear-gradient(#686868,#5f5f5f);border-bottom:1.500px solid #484848;width:429.700px;height:133.200px"><div class="a" style="left:27px;top:0;width:1px;height:133px;background:#4e4e4e"></div><div class="num" style="top:59.7px;font-size:17.300px;left:1.200px">25</div><div class="t" style="left:128px;top:44.2px;font-size:17.7px">House Chords</div><div class="ms" style="left:127px;top:67.400px;width:54.500px"></div><div class="a" style="left:154.300px;top:67.400px;width:1px;height:23.600px;background:#333"></div><div class="ms" style="left:127px;top:67.400px;width:27.500px;background:none;box-shadow:none">M</div><div class="ms" style="left:154.500px;top:67.400px;width:27px;background:none;box-shadow:none">S</div><div class="ms" style="left:189.300px;top:67.400px;width:27.700px;">R</div><div class="sl" style="top:71.300px"></div><div class="kn" style="left:273.8px;top:66.800px"></div><svg width="429.5" height="133" viewBox="0 0 429.5 133" style="position:absolute;left:0;top:0;overflow:visible"><path d="M385.93 79.27A16.2 16.2 0 1 1 405.87 79.27" fill="none" stroke="#353535" stroke-width="3.400"/><circle cx="395.9" cy="66.5" r="13.600" fill="#8b8b8b"/><path d="M395.9 63.5V52.5" stroke="#343434" stroke-width="1.700"/><path d="M395.9 52.0V47.9" stroke="#58d058" stroke-width="1.300"/><text x="382.29999999999995" y="88.7" font-size="7" font-weight="bold" fill="#c4c4c4" font-family="Liberation Sans">L</text><text x="403.5" y="88.7" font-size="7" font-weight="bold" fill="#c4c4c4" font-family="Liberation Sans">R</text><ellipse cx="87" cy="80" rx="12" ry="3" fill="#000" opacity=".13"/><g stroke="#1f1f1f" stroke-width="1.250" stroke-linecap="round" fill="none"><path d="M82.100 57l13.800 22.800"/><path d="M91.800 59.500l-12.200 14.600"/><path d="M74 77.300l11.300-3.700"/><path d="M90.200 83l10.600-4.800"/></g><path d="M75.600 50.500l21.400 5.100 7-3.100v2l-7 3.300-21.400-5z" fill="#9a4f28"/><path d="M75.600 50.500l7.400-1.900 21 3.900-7 3.100z" fill="#d9dde0"/><path d="M82.500 50.300l4.300-1.100 10.200 1.900-3.800 1.500z" fill="#3f83b8"/><path d="M93.800 52.700l3.400-1.300 3.300.6-3.300 1.500z" fill="#f3f3f3"/><path d="M77 51.400l19.600 4.600" stroke="#fafafa" stroke-width="1"/></svg></div><div class="trk" style="top:353.2px;background:#888888;border-bottom:1.500px solid #484848;width:429.700px;height:133.200px"><div class="a" style="left:27px;top:0;width:1px;height:133px;background:#6e6e6e"></div><div class="num" style="top:59.7px;font-size:17.300px;left:1.200px">26</div><div class="t" style="left:128px;top:44.2px;font-size:17.45px">Percussive Square Lead</div><div class="ms" style="left:127px;top:67.400px;width:54.500px"></div><div class="a" style="left:154.300px;top:67.400px;width:1px;height:23.600px;background:#333"></div><div class="ms" style="left:127px;top:67.400px;width:27.500px;background:none;box-shadow:none">M</div><div class="ms" style="left:154.500px;top:67.400px;width:27px;background:none;box-shadow:none">S</div><div class="ms" style="left:189.300px;top:67.400px;width:27.700px;background:#d23b30;box-shadow:0 0 0 1px #a93027 inset;color:#fff;">R</div><div class="sl" style="top:71.300px"></div><div class="kn" style="left:265.5px;top:66.800px"></div><svg width="429.5" height="133" viewBox="0 0 429.5 133" style="position:absolute;left:0;top:0;overflow:visible"><path d="M385.93 79.27A16.2 16.2 0 1 1 405.87 79.27" fill="none" stroke="#353535" stroke-width="3.400"/><circle cx="395.9" cy="66.5" r="13.600" fill="#bdbdbd"/><path d="M395.9 63.5V52.5" stroke="#343434" stroke-width="1.700"/><path d="M395.9 52.0V47.9" stroke="#58d058" stroke-width="1.300"/><text x="382.29999999999995" y="88.7" font-size="7" font-weight="bold" fill="#dddddd" font-family="Liberation Sans">L</text><text x="403.5" y="88.7" font-size="7" font-weight="bold" fill="#dddddd" font-family="Liberation Sans">R</text><ellipse cx="86" cy="80" rx="12" ry="3" fill="#000" opacity=".13"/><g stroke="#1f1f1f" stroke-width="1.250" stroke-linecap="round" fill="none"><path d="M82.100 60.400l11.400 20.300"/><path d="M91 62l-12.200 13.800"/><path d="M74 78l8.900-3.800"/><path d="M88.600 83.200l10.600-5.200"/></g><path d="M71.200 54.700l7.600-2.400 26 4v2.500l-9.700 4-23.900-4.800z" fill="#a5582a"/><path d="M71.200 55.700l23.900 4.700 9.700-3.800v2.200l-9.700 4-23.900-4.800z" fill="#7d3c1a"/><path d="M73 55.900l21.500 4.300" stroke="#f1f1f1" stroke-width="1.500"/><path d="M73.300 55.200l21.400 4.200" stroke="#333" stroke-width=".7"/><path d="M79.600 45.400l22.800 4.400-1.600 8.200-22-4.900z" fill="#222223"/><path d="M79.600 45.400l22.800 4.400-.3 1.400-22.700-4.400z" fill="#bf672c"/><circle cx="82.0" cy="49.0" r=".65" fill="#ddd"/><circle cx="81.6" cy="51.8" r=".65" fill="#aeb4ba"/><circle cx="84.8" cy="49.5" r=".65" fill="#ddd"/><circle cx="84.4" cy="52.3" r=".65" fill="#aeb4ba"/><circle cx="87.6" cy="50.1" r=".65" fill="#ddd"/><circle cx="87.2" cy="52.9" r=".65" fill="#aeb4ba"/><circle cx="90.4" cy="50.6" r=".65" fill="#ddd"/><circle cx="90.0" cy="53.4" r=".65" fill="#aeb4ba"/><circle cx="93.2" cy="51.2" r=".65" fill="#ddd"/><circle cx="92.8" cy="54.0" r=".65" fill="#aeb4ba"/><circle cx="96.0" cy="51.8" r=".65" fill="#ddd"/><circle cx="95.6" cy="54.5" r=".65" fill="#aeb4ba"/><circle cx="98.8" cy="52.3" r=".65" fill="#ddd"/><circle cx="98.4" cy="55.1" r=".65" fill="#aeb4ba"/></svg></div><div class="a" style="left:1373.500px;top:86.800px;width:29.500px;height:882.500px;background:#626262"></div><div class="a" style="left:1373.500px;top:86.8px;width:29.500px;height:133.200px;border-bottom:1.500px solid #4c4c4c;background:#646464"></div><div class="a" style="left:1373.500px;top:220.0px;width:29.500px;height:133.200px;border-bottom:1.500px solid #4c4c4c;background:#646464"></div><div class="a" style="left:1373.500px;top:353.2px;width:29.500px;height:133.200px;border-bottom:1.500px solid #4c4c4c;background:#888888"></div><div class="cell y" style="left:431.4px;top:87.7px;width:133.0px"><svg width="133" height="130" viewBox="0 0 133 130" ><g fill="none" stroke="#f0dd96"><circle cx="67.1" cy="74.7" r="19.60" stroke-width=".9" opacity=".58"/><circle cx="67.1" cy="74.7" r="21.42" stroke-width=".9" opacity=".58"/><circle cx="67.1" cy="74.7" r="23.23" stroke-width=".9" opacity=".58"/><circle cx="67.1" cy="74.7" r="25.05" stroke-width=".9" opacity=".58"/><circle cx="67.1" cy="74.7" r="26.86" stroke-width=".9" opacity=".58"/><circle cx="67.1" cy="74.7" r="28.68" stroke-width=".9" opacity=".58"/><circle cx="67.1" cy="74.7" r="30.49" stroke-width=".9" opacity=".58"/><circle cx="67.1" cy="74.7" r="32.31" stroke-width=".9" opacity=".58"/><circle cx="67.1" cy="74.7" r="34.12" stroke-width=".9" opacity=".58"/><circle cx="67.1" cy="74.7" r="35.94" stroke-width=".9" opacity=".58"/><circle cx="67.1" cy="74.7" r="37.75" stroke-width=".9" opacity=".58"/><circle cx="67.1" cy="74.7" r="39.56" stroke-width=".9" opacity=".58"/><circle cx="67.1" cy="74.7" r="41.38" stroke-width=".9" opacity=".58"/><circle cx="67.1" cy="74.7" r="43.19" stroke-width=".9" opacity=".58"/><circle cx="67.1" cy="74.7" r="10.1" stroke-width=".8" opacity=".6"/><circle cx="67.1" cy="74.7" r="12.7" stroke-width=".8" opacity=".6"/><circle cx="67.1" cy="74.7" r="16" stroke-width="1.500" stroke="#fbeeb5" stroke-dasharray="5.300 .98" transform="rotate(-96 67.1 74.7)"/></g><path d="M57.68 52.52A24.1 24.1 0 0 1 60.22 51.60M76.13 52.35A24.1 24.1 0 0 1 78.57 53.50M44.75 65.67A24.1 24.1 0 0 1 45.90 63.23M89.28 65.28A24.1 24.1 0 0 1 90.20 67.82M89.45 83.73A24.1 24.1 0 0 1 88.30 86.17M76.52 96.88A24.1 24.1 0 0 1 73.98 97.80M58.07 97.05A24.1 24.1 0 0 1 55.63 95.90M44.92 84.12A24.1 24.1 0 0 1 44.00 81.58M53.07 41.65A35.9 35.9 0 0 1 55.60 40.69M80.55 41.41A35.9 35.9 0 0 1 83.01 42.52M33.81 61.25A35.9 35.9 0 0 1 34.92 58.79M100.15 60.67A35.9 35.9 0 0 1 101.11 63.20M100.39 88.15A35.9 35.9 0 0 1 99.28 90.61M34.05 88.73A35.9 35.9 0 0 1 33.09 86.20M41.94 100.31A35.9 35.9 0 0 1 40.08 98.34M59.05 35.98A39.55 39.55 0 0 1 61.71 35.52M58.67 34.17A41.4 41.4 0 0 1 61.33 33.70M66.75 35.15A39.55 39.55 0 0 1 69.45 35.22M66.74 33.30A41.4 41.4 0 0 1 69.44 33.37M99.79 52.44A39.55 39.55 0 0 1 101.23 54.72M101.32 51.40A41.4 41.4 0 0 1 102.77 53.68M27.55 75.05A39.55 39.55 0 0 1 27.62 72.35M25.70 75.06A41.4 41.4 0 0 1 25.77 72.36M106.65 74.35A39.55 39.55 0 0 1 106.58 77.05M108.50 74.34A41.4 41.4 0 0 1 108.43 77.04M34.41 96.96A39.55 39.55 0 0 1 32.97 94.68M32.88 98.00A41.4 41.4 0 0 1 31.43 95.72M67.45 114.25A39.55 39.55 0 0 1 64.75 114.18M67.46 116.10A41.4 41.4 0 0 1 64.76 116.03M80.95 111.75A39.55 39.55 0 0 1 78.39 112.60M81.60 113.48A41.4 41.4 0 0 1 79.04 114.34M107.36 65.04A41.4 41.4 0 0 1 107.90 67.68M103.13 95.09A41.4 41.4 0 0 1 101.73 97.39M46.71 110.73A41.4 41.4 0 0 1 44.41 109.33" fill="none" stroke="#fff6cc" stroke-width="1.750"/></svg><div class="nm">808 Flex</div></div><div class="cell y" style="left:568.5px;top:87.7px;width:133.0px"><svg width="133" height="130" viewBox="0 0 133 130" ><g fill="none" stroke="#f0dd96"><circle cx="67.1" cy="74.7" r="19.60" stroke-width=".9" opacity=".58"/><circle cx="67.1" cy="74.7" r="21.42" stroke-width=".9" opacity=".58"/><circle cx="67.1" cy="74.7" r="23.23" stroke-width=".9" opacity=".58"/><circle cx="67.1" cy="74.7" r="25.05" stroke-width=".9" opacity=".58"/><circle cx="67.1" cy="74.7" r="26.86" stroke-width=".9" opacity=".58"/><circle cx="67.1" cy="74.7" r="28.68" stroke-width=".9" opacity=".58"/><circle cx="67.1" cy="74.7" r="30.49" stroke-width=".9" opacity=".58"/><circle cx="67.1" cy="74.7" r="32.31" stroke-width=".9" opacity=".58"/><circle cx="67.1" cy="74.7" r="34.12" stroke-width=".9" opacity=".58"/><circle cx="67.1" cy="74.7" r="35.94" stroke-width=".9" opacity=".58"/><circle cx="67.1" cy="74.7" r="37.75" stroke-width=".9" opacity=".58"/><circle cx="67.1" cy="74.7" r="39.56" stroke-width=".9" opacity=".58"/><circle cx="67.1" cy="74.7" r="41.38" stroke-width=".9" opacity=".58"/><circle cx="67.1" cy="74.7" r="43.19" stroke-width=".9" opacity=".58"/><circle cx="67.1" cy="74.7" r="10.1" stroke-width=".8" opacity=".6"/><circle cx="67.1" cy="74.7" r="12.7" stroke-width=".8" opacity=".6"/><circle cx="67.1" cy="74.7" r="16" stroke-width="1.500" stroke="#fbeeb5" stroke-dasharray="5.300 .98" transform="rotate(-96 67.1 74.7)"/></g><path d="M57.68 52.52A24.1 24.1 0 0 1 60.22 51.60M76.13 52.35A24.1 24.1 0 0 1 78.57 53.50M44.75 65.67A24.1 24.1 0 0 1 45.90 63.23M89.28 65.28A24.1 24.1 0 0 1 90.20 67.82M89.45 83.73A24.1 24.1 0 0 1 88.30 86.17M76.52 96.88A24.1 24.1 0 0 1 73.98 97.80M58.07 97.05A24.1 24.1 0 0 1 55.63 95.90M44.92 84.12A24.1 24.1 0 0 1 44.00 81.58M53.07 41.65A35.9 35.9 0 0 1 55.60 40.69M80.55 41.41A35.9 35.9 0 0 1 83.01 42.52M33.81 61.25A35.9 35.9 0 0 1 34.92 58.79M100.15 60.67A35.9 35.9 0 0 1 101.11 63.20M100.39 88.15A35.9 35.9 0 0 1 99.28 90.61M34.05 88.73A35.9 35.9 0 0 1 33.09 86.20M41.94 100.31A35.9 35.9 0 0 1 40.08 98.34M59.05 35.98A39.55 39.55 0 0 1 61.71 35.52M58.67 34.17A41.4 41.4 0 0 1 61.33 33.70M66.75 35.15A39.55 39.55 0 0 1 69.45 35.22M66.74 33.30A41.4 41.4 0 0 1 69.44 33.37M99.79 52.44A39.55 39.55 0 0 1 101.23 54.72M101.32 51.40A41.4 41.4 0 0 1 102.77 53.68M27.55 75.05A39.55 39.55 0 0 1 27.62 72.35M25.70 75.06A41.4 41.4 0 0 1 25.77 72.36M106.65 74.35A39.55 39.55 0 0 1 106.58 77.05M108.50 74.34A41.4 41.4 0 0 1 108.43 77.04M34.41 96.96A39.55 39.55 0 0 1 32.97 94.68M32.88 98.00A41.4 41.4 0 0 1 31.43 95.72M67.45 114.25A39.55 39.55 0 0 1 64.75 114.18M67.46 116.10A41.4 41.4 0 0 1 64.76 116.03M80.95 111.75A39.55 39.55 0 0 1 78.39 112.60M81.60 113.48A41.4 41.4 0 0 1 79.04 114.34M107.36 65.04A41.4 41.4 0 0 1 107.90 67.68M103.13 95.09A41.4 41.4 0 0 1 101.73 97.39M46.71 110.73A41.4 41.4 0 0 1 44.41 109.33" fill="none" stroke="#fff6cc" stroke-width="1.750"/></svg><div class="nm">808 Flex</div></div><div class="cell y" style="left:705.6px;top:87.7px;width:133.0px"><svg width="133" height="130" viewBox="0 0 133 130" ><g fill="none" stroke="#f0dd96"><circle cx="67.1" cy="74.7" r="19.60" stroke-width=".9" opacity=".58"/><circle cx="67.1" cy="74.7" r="21.42" stroke-width=".9" opacity=".58"/><circle cx="67.1" cy="74.7" r="23.23" stroke-width=".9" opacity=".58"/><circle cx="67.1" cy="74.7" r="25.05" stroke-width=".9" opacity=".58"/><circle cx="67.1" cy="74.7" r="26.86" stroke-width=".9" opacity=".58"/><circle cx="67.1" cy="74.7" r="28.68" stroke-width=".9" opacity=".58"/><circle cx="67.1" cy="74.7" r="30.49" stroke-width=".9" opacity=".58"/><circle cx="67.1" cy="74.7" r="32.31" stroke-width=".9" opacity=".58"/><circle cx="67.1" cy="74.7" r="34.12" stroke-width=".9" opacity=".58"/><circle cx="67.1" cy="74.7" r="35.94" stroke-width=".9" opacity=".58"/><circle cx="67.1" cy="74.7" r="37.75" stroke-width=".9" opacity=".58"/><circle cx="67.1" cy="74.7" r="39.56" stroke-width=".9" opacity=".58"/><circle cx="67.1" cy="74.7" r="41.38" stroke-width=".9" opacity=".58"/><circle cx="67.1" cy="74.7" r="43.19" stroke-width=".9" opacity=".58"/><circle cx="67.1" cy="74.7" r="10.1" stroke-width=".8" opacity=".6"/><circle cx="67.1" cy="74.7" r="12.7" stroke-width=".8" opacity=".6"/><circle cx="67.1" cy="74.7" r="16" stroke-width="1.500" stroke="#fbeeb5" stroke-dasharray="5.300 .98" transform="rotate(-96 67.1 74.7)"/></g><path d="M57.68 52.52A24.1 24.1 0 0 1 60.22 51.60M76.13 52.35A24.1 24.1 0 0 1 78.57 53.50M44.75 65.67A24.1 24.1 0 0 1 45.90 63.23M89.28 65.28A24.1 24.1 0 0 1 90.20 67.82M89.45 83.73A24.1 24.1 0 0 1 88.30 86.17M76.52 96.88A24.1 24.1 0 0 1 73.98 97.80M58.07 97.05A24.1 24.1 0 0 1 55.63 95.90M44.92 84.12A24.1 24.1 0 0 1 44.00 81.58M53.07 41.65A35.9 35.9 0 0 1 55.60 40.69M80.55 41.41A35.9 35.9 0 0 1 83.01 42.52M33.81 61.25A35.9 35.9 0 0 1 34.92 58.79M100.15 60.67A35.9 35.9 0 0 1 101.11 63.20M100.39 88.15A35.9 35.9 0 0 1 99.28 90.61M34.05 88.73A35.9 35.9 0 0 1 33.09 86.20M41.94 100.31A35.9 35.9 0 0 1 40.08 98.34M59.05 35.98A39.55 39.55 0 0 1 61.71 35.52M58.67 34.17A41.4 41.4 0 0 1 61.33 33.70M66.75 35.15A39.55 39.55 0 0 1 69.45 35.22M66.74 33.30A41.4 41.4 0 0 1 69.44 33.37M99.79 52.44A39.55 39.55 0 0 1 101.23 54.72M101.32 51.40A41.4 41.4 0 0 1 102.77 53.68M27.55 75.05A39.55 39.55 0 0 1 27.62 72.35M25.70 75.06A41.4 41.4 0 0 1 25.77 72.36M106.65 74.35A39.55 39.55 0 0 1 106.58 77.05M108.50 74.34A41.4 41.4 0 0 1 108.43 77.04M34.41 96.96A39.55 39.55 0 0 1 32.97 94.68M32.88 98.00A41.4 41.4 0 0 1 31.43 95.72M67.45 114.25A39.55 39.55 0 0 1 64.75 114.18M67.46 116.10A41.4 41.4 0 0 1 64.76 116.03M80.95 111.75A39.55 39.55 0 0 1 78.39 112.60M81.60 113.48A41.4 41.4 0 0 1 79.04 114.34M107.36 65.04A41.4 41.4 0 0 1 107.90 67.68M103.13 95.09A41.4 41.4 0 0 1 101.73 97.39M46.71 110.73A41.4 41.4 0 0 1 44.41 109.33" fill="none" stroke="#fff6cc" stroke-width="1.750"/></svg><div class="nm">808 Flex</div></div><div class="cell" style="left:842.7px;top:87.7px;width:133.0px;background:#383838;border-radius:6px;"></div><div class="cell" style="left:979.8px;top:87.7px;width:133.0px;background:#383838;border-radius:6px;"></div><div class="cell" style="left:1116.9px;top:87.7px;width:133.0px;background:#383838;border-radius:6px;"></div><div class="cell" style="left:1254.0px;top:87.7px;width:118.0px;background:#383838;border-radius:6px 0 0 6px;"></div><div class="cell" style="left:431.4px;top:221.0px;width:133.0px;background:#383838;border-radius:6px;"></div><div class="cell g" style="left:568.5px;top:221.0px;width:133.0px"><svg width="133" height="130" viewBox="0 0 133 130" ><circle cx="66.600" cy="74.400" r="40.900" fill="none" stroke="#cdeec8" stroke-width="1.850"/></svg><div class="nm">House Chords</div></div><div class="cell g" style="left:705.6px;top:221.0px;width:133.0px"><svg width="133" height="130" viewBox="0 0 133 130" ><circle cx="66.600" cy="74.400" r="40.900" fill="none" stroke="#cdeec8" stroke-width="1.850"/></svg><div class="nm">House Chords</div></div><div class="cell" style="left:842.7px;top:221.0px;width:133.0px;background:#383838;border-radius:6px;"></div><div class="cell" style="left:979.8px;top:221.0px;width:133.0px;background:#383838;border-radius:6px;"></div><div class="cell" style="left:1116.9px;top:221.0px;width:133.0px;background:#383838;border-radius:6px;"></div><div class="cell" style="left:1254.0px;top:221.0px;width:118.0px;background:#383838;border-radius:6px 0 0 6px;"></div><div class="cell" style="left:431.4px;top:354.3px;width:133.0px;background:#444444;border-radius:6px;"></div><div class="cell" style="left:568.5px;top:354.3px;width:133.0px;background:#444444;border-radius:6px;"></div><div class="cell g" style="left:705.6px;top:354.3px;width:133.0px"><svg width="133" height="130" viewBox="0 0 133 130" ><path d="M67.62 51.43A23.4 23.4 0 0 1 86.24 62.40M89.24 76.40A22.9 22.9 0 0 1 86.03 86.59M80.31 66.11A16.4 16.4 0 0 1 82.78 75.66M77.87 82.83A14 14 0 0 1 72.54 87.38M72.15 90.59A16.8 16.8 0 0 1 66.99 91.59M37.52 104.19A41.2 41.2 0 0 0 66.40 116.00" fill="none" stroke="#d0eecb" stroke-width="1.850"/></svg><div class="nm" style=font-size:15px>Percuss...re Lead</div></div><div class="cell" style="left:842.7px;top:354.3px;width:133.0px;background:#444444;border-radius:6px;"></div><div class="cell" style="left:979.8px;top:354.3px;width:133.0px;background:#444444;border-radius:6px;"></div><div class="cell" style="left:1116.9px;top:354.3px;width:133.0px;background:#444444;border-radius:6px;"></div><div class="cell" style="left:1254.0px;top:354.3px;width:118.0px;background:#444444;border-radius:6px 0 0 6px;"></div><div class="a" style="left:431px;top:909.300px;width:941px;height:60px;background:#3a3a3a;border-top:1px solid #2a2a2a"></div><div class="a" style="left:431px;top:909.500px;width:134.500px;height:36.300px;background:#666"></div><div class="a" style="left:566.7px;top:909.500px;width:1.500px;height:60px;background:#303030"></div><div class="a" style="left:703.8px;top:909.500px;width:1.500px;height:60px;background:#303030"></div><div class="a" style="left:841.0px;top:909.500px;width:1.500px;height:60px;background:#303030"></div><div class="a" style="left:978.2px;top:909.500px;width:1.500px;height:60px;background:#303030"></div><div class="a" style="left:1115.3px;top:909.500px;width:1.500px;height:60px;background:#303030"></div><div class="a" style="left:1252.5px;top:909.500px;width:1.500px;height:60px;background:#303030"></div><svg width="1403" height="969" viewBox="0 0 1403 969" style="position:absolute;left:0;top:0;overflow:visible"><path d="M487.4 934.200l10.300-11 10.300 11-10.300-5.200z" fill="#e4e4e4"/><text x="497.7" y="961.300" font-size="14.500" fill="#cfcfcf" text-anchor="middle" font-family="Liberation Sans">1</text><path d="M624.6 934.200l10.300-11 10.300 11-10.300-5.200z" fill="#e4e4e4"/><text x="634.9" y="961.300" font-size="14.500" fill="#cfcfcf" text-anchor="middle" font-family="Liberation Sans">2</text><path d="M761.7 934.200l10.300-11 10.300 11-10.300-5.200z" fill="#e4e4e4"/><text x="772.0" y="961.300" font-size="14.500" fill="#cfcfcf" text-anchor="middle" font-family="Liberation Sans">3</text><path d="M898.9 934.200l10.300-11 10.300 11-10.300-5.200z" fill="#e4e4e4"/><text x="909.2" y="961.300" font-size="14.500" fill="#cfcfcf" text-anchor="middle" font-family="Liberation Sans">4</text><path d="M1036.1 934.200l10.300-11 10.300 11-10.300-5.200z" fill="#e4e4e4"/><text x="1046.4" y="961.300" font-size="14.500" fill="#cfcfcf" text-anchor="middle" font-family="Liberation Sans">5</text><path d="M1173.2 934.200l10.300-11 10.300 11-10.300-5.200z" fill="#e4e4e4"/><text x="1183.5" y="961.300" font-size="14.500" fill="#cfcfcf" text-anchor="middle" font-family="Liberation Sans">6</text><path d="M1310.4 934.200l10.300-11 10.300 11-10.300-5.200z" fill="#e4e4e4"/><text x="1320.7" y="961.300" font-size="14.500" fill="#cfcfcf" text-anchor="middle" font-family="Liberation Sans">7</text></svg><div class="a" style="left:1373.300px;top:908.300px;width:30px;height:61px;background:#565656;border-top:1.300px solid #0c0c0c"></div><div class="a" style="left:1379.500px;top:932.800px;width:16px;height:16px;border-radius:1.500px;background:#dedede"></div></div></div></div></div></body></html>
